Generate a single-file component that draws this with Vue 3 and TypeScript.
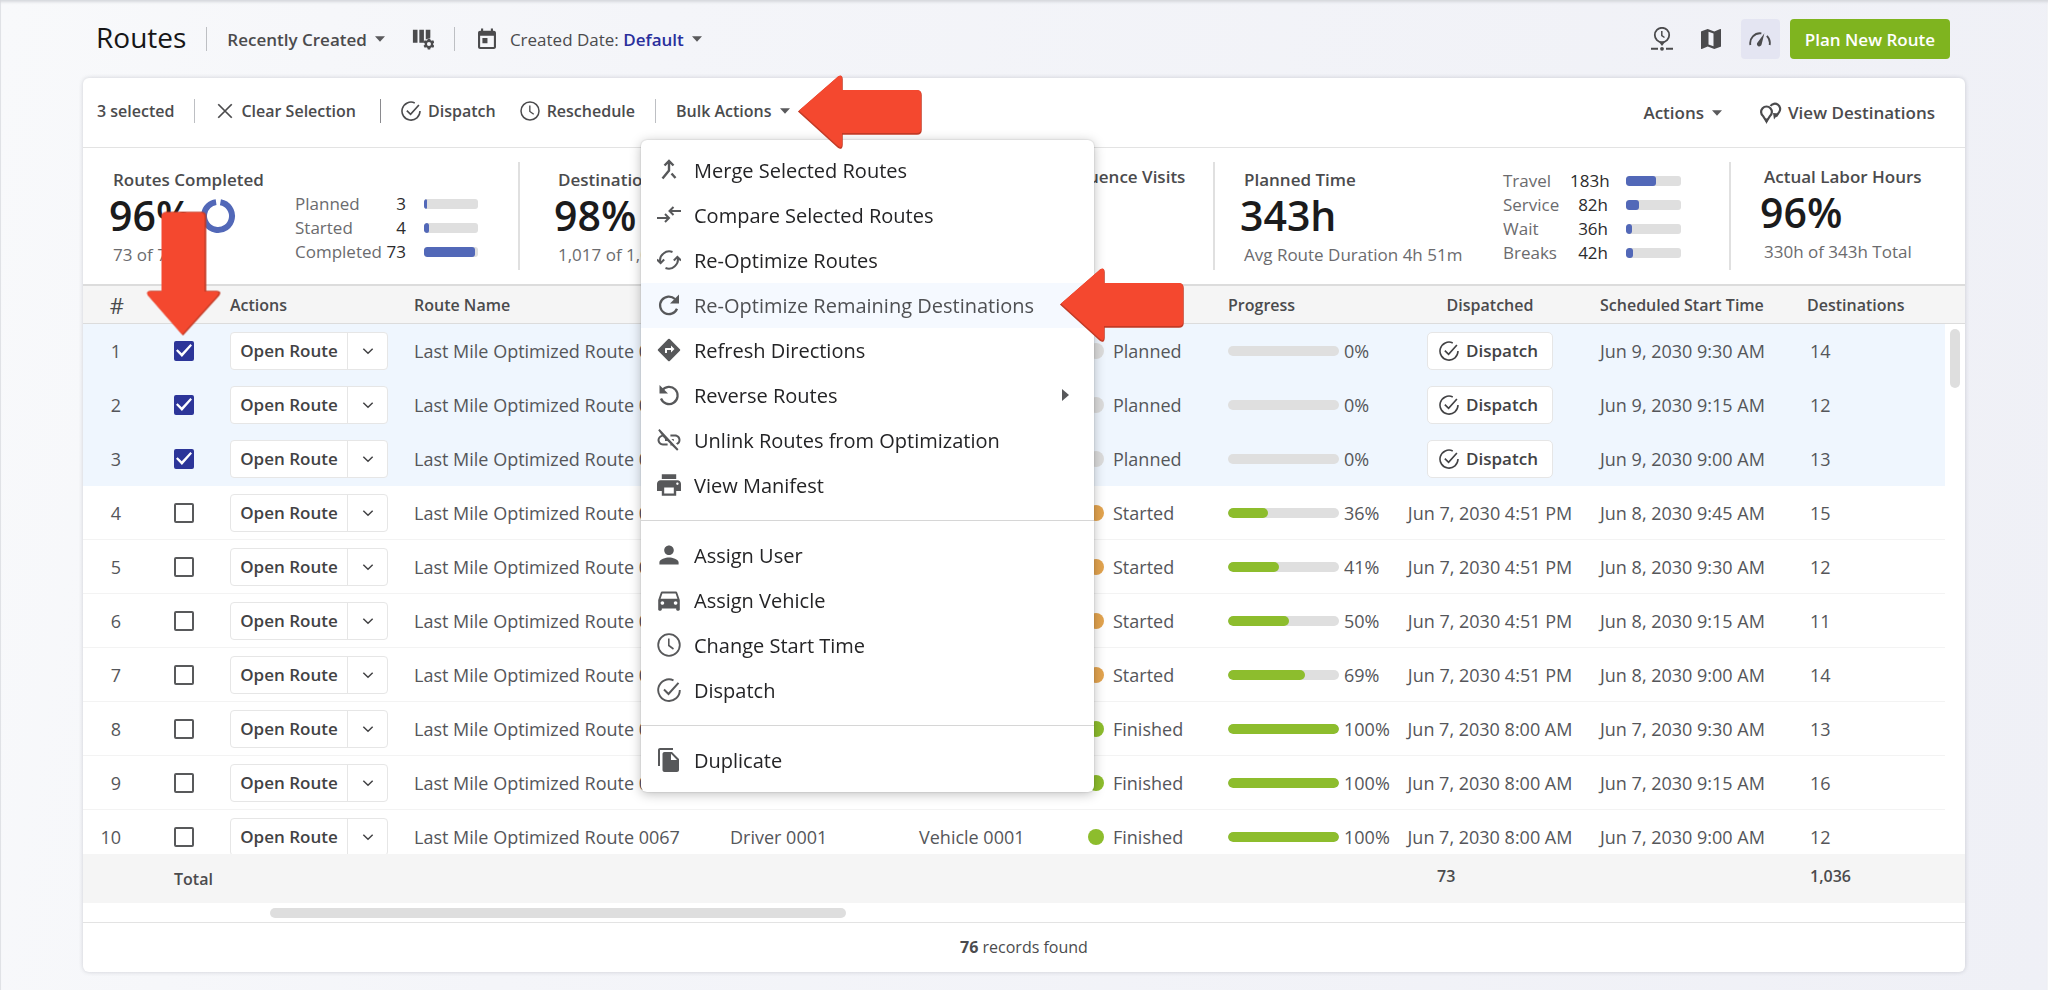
<script setup lang="ts">
import { h, ref } from 'vue'

const s = (d: string, w = 2) => `<path d="${d}" fill="none" stroke="currentColor" stroke-width="${w}"/>`
const f = (d: string) => `<path d="${d}" fill="currentColor" fill-rule="evenodd"/>`
const grow = (inner: string, k: number) => `<g transform="translate(12 12) scale(${k}) translate(-12 -12)">${inner}</g>`

const icons: Record<string, string> = {
  merge: s('M12 3.5V12.5L5.5 20.5M7.5 7.5L12 3L16.5 7.5', 2.4) + s('M14.5 15.5L18.5 20', 2.4),
  compare: s('M0 15H11M8 11L12 15L8 19M24 8H13M16.5 4L12.5 8L16.5 12'),
  cached: s('M6.5 5.5A8.7 8.7 0 0 1 15.5 4M3.3 14.5A8.8 8.8 0 0 1 6.5 5.5M0 11.5L3.6 15L7.2 11.5') +
    s('M8.5 20A8.7 8.7 0 0 0 17.8 18.2A8.8 8.8 0 0 0 20.7 9.5M16.8 12.5L20.4 9L24 12.5'),
  refresh: s('M20 15.8A8.8 8.8 0 1 1 18 6', 2.3) + f('M22 1.5V10.5H13Z'),
  directions: f('M22.9 11.2l-10.1-10.1a1.1 1.1 0 0 0-1.6 0L1.1 11.2a1.1 1.1 0 0 0 0 1.6l10.1 10.1c.44.44 1.15.44 1.6 0l10.1-10.1a1.1 1.1 0 0 0 0-1.6zM14 14.5V12h-4v3H8v-4c0-.55.45-1 1-1h5V7.5l3.5 3.5-3.5 3.5z'),
  replay: s('M5 7.5A8.6 8.6 0 1 1 4 15.5', 2.2) + f('M2.5 2V10.5H11Z'),
  unlink: f('M18 6.6h-4.6v1.9H18c1.9 0 3.5 1.6 3.5 3.5 0 1.6-1 2.9-2.5 3.3l1.5 1.5C22.3 16 23.5 14.2 23.5 12c0-3-2.5-5.4-5.5-5.4zM16.8 11h-2.4l2 2h.4zM1.2 2.3L4.7 6.9C2.2 7.6.5 9.6.5 12c0 3 2.5 5.4 5.5 5.4h4.6v-1.9H6c-1.9 0-3.5-1.6-3.5-3.5 0-1.8 1.4-3.3 3.2-3.5L8 11v2h2.4l3 3v1.4h1.4l5.3 5.3 1.4-1.4L2.6.9z'),
  print: grow(f('M19 8H5c-1.66 0-3 1.34-3 3v6h4v4h12v-4h4v-6c0-1.66-1.34-3-3-3zm-3 11H8v-5h8v5zm3-7c-.55 0-1-.45-1-1s.45-1 1-1 1 .45 1 1-.45 1-1 1zm-1-9H6v4h12V3z'), 1.2),
  person: grow(f('M12 12c2.21 0 4-1.79 4-4s-1.79-4-4-4-4 1.79-4 4 1.79 4 4 4zm0 2c-2.67 0-8 1.34-8 4v2h16v-2c0-2.66-5.33-4-8-4z'), 1.2),
  car: grow(f('M18.92 6.01C18.72 5.42 18.16 5 17.5 5h-11c-.66 0-1.21.42-1.42 1.01L3 12v8c0 .55.45 1 1 1h1c.55 0 1-.45 1-1v-1h12v1c0 .55.45 1 1 1h1c.55 0 1-.45 1-1v-8l-2.08-5.99zM6.5 16c-.83 0-1.5-.67-1.5-1.5S5.67 13 6.5 13s1.5.67 1.5 1.5S7.33 16 6.5 16zm11 0c-.83 0-1.5-.67-1.5-1.5s.67-1.5 1.5-1.5 1.5.67 1.5 1.5-.67 1.5-1.5 1.5zM5 11l1.5-4.5h11L19 11H5z'), 1.2),
  clock: '<circle cx="12" cy="12" r="10.8" fill="none" stroke="currentColor" stroke-width="1.8"/>' + s('M11.8 5.5V12.5L16.5 16', 1.6),
  check: s('M16.5 2.3A10.8 10.8 0 1 0 22.8 12', 1.9) + s('M7 11.5L11.5 16L21.5 4.8', 2),
  copy: f('M16 0H3C1.9 0 1 .9 1 2v16h2V2h13zM15 4l7 7v11c0 1.1-.9 2-2 2H7.5c-1.1 0-2-.9-2-2V6c0-1.1.9-2 2-2zm-1 8h6L14 5.7z'),
  close: s('M3 3L21 21M21 3L3 21', 2.3),
  columns: f('M1 2h5v14H1zM8 2h5v14H8zM15 2h5v8.5l-5 2z') +
    f('M17.2 11.5h2.6l.4 1.7 1.2.7 1.7-.5 1.3 2.2-1.3 1.2v1.4l1.3 1.2-1.3 2.2-1.7-.5-1.2.7-.4 1.7h-2.6l-.4-1.7-1.2-.7-1.7.5-1.3-2.2 1.3-1.2v-1.4l-1.3-1.2 1.3-2.2 1.7.5 1.2-.7zM18.5 15.3a2.2 2.2 0 1 0 0 4.4 2.2 2.2 0 0 0 0-4.4z'),
  calendar: f('M19.5 3H18.5V.5h-2.3V3H7.8V.5H5.5V3H4.5C3.2 3 2.2 4 2.2 5.2v15.6C2.2 22 3.2 23 4.5 23h15c1.2 0 2.3-1 2.3-2.2V5.2C21.8 4 20.7 3 19.5 3zm0 17.8h-15V8.5h15zM7 11h5.5v5.5H7z'),
  pinClock: '<circle cx="12" cy="8" r="7.2" fill="none" stroke="currentColor" stroke-width="1.8"/>' +
    s('M11.8 4V8.5L14.5 10.5', 1.5) + f('M9 15h6L12 19zM1 20.8h7v2H1zM16 20.8h7v2H16z') + '<circle cx="12" cy="21.8" r="1.9" fill="currentColor"/>',
  map: f('M21.5 2L21.2 2.1 15.3 4.4 8.7 2.1 2.4 4.2C2.2 4.3 2 4.5 2 4.8v16.6c0 .3.3.6.6.6l.2-.1 5.9-2.3 6.6 2.3 6.3-2.1c.2-.1.4-.3.4-.6V2.6c0-.3-.2-.6-.5-.6zM9.5 4.8l5 1.7v12.8l-5-1.7z'),
  gauge: s('M1.5 18.5A10.8 10.8 0 0 1 13.5 5.8M19.5 8.5A11 11 0 0 1 22.5 18.5', 2) + f('M16.8 5.8L13.8 17.8A2.6 2.6 0 1 1 9.3 15.7z'),
  pins: s('M7.5 20.5L4 15A5.4 5.4 0 1 1 11 15Z', 2.2) + s('M11.5 5A5.2 5.2 0 1 1 20.2 11L17 15.5', 2.2) +
    f('M5.5 17.5h4L7.5 23zM14 12l5.5 .5L15 18.5z'),
  chevron: s('M5 8.5L12 15.5L19 8.5', 2.2),
}

const Icon = (p: { name: string }) =>
  h('svg', { viewBox: '0 0 24 24', 'aria-hidden': 'true', innerHTML: icons[p.name] })
Icon.props = ['name']

const Caret = () =>
  h('svg', { viewBox: '0 0 10 6', 'aria-hidden': 'true', width: 10, height: 6, innerHTML: '<path d="M0 .3H10L5 5.7Z" fill="currentColor"/>' })

const arrowPath = 'M2 36.5L41 2.5Q45 0 45 4V16H120Q124 16 124 20V55Q124 59 120 59H45V70Q45 75 41 72Z'
const Arrow = () =>
  h('svg', {
    viewBox: '0 0 126 75', width: 126, height: 75, 'aria-hidden': 'true',
    innerHTML: `<path d="${arrowPath}" fill="#c23a25" stroke="#c23a25" stroke-width="1.5"/><path d="${arrowPath}" transform="translate(0 -1)" fill="#f4482f"/>`,
  })

type Bar = { label: string; value: string; pct: number }
type Stat = { title: string; value: string; sub: string; ring?: number; raised?: boolean; bars?: Bar[]; arrow?: boolean }
const stats: Stat[] = [
  { title: 'Routes Completed', value: '96%', sub: '73 of 76', ring: 96, arrow: true, bars: [
    { label: 'Planned', value: '3', pct: 6 }, { label: 'Started', value: '4', pct: 9 }, { label: 'Completed', value: '73', pct: 94 }] },
  { title: 'Destinations Completed', value: '98%', sub: '1,017 of 1,036' },
  { title: 'Out of Sequence Visits', value: '0%', sub: '0 of 73', ring: 0, raised: true },
  { title: 'Planned Time', value: '343h', sub: 'Avg Route Duration 4h 51m', bars: [
    { label: 'Travel', value: '183h', pct: 54 }, { label: 'Service', value: '82h', pct: 24 },
    { label: 'Wait', value: '36h', pct: 10 }, { label: 'Breaks', value: '42h', pct: 13 }] },
  { title: 'Actual Labor Hours', value: '96%', sub: '330h of 343h Total', raised: true },
]

type MenuItem = { icon: string; label: string; active?: boolean; sub?: boolean }
const menu: MenuItem[][] = [
  [
    { icon: 'merge', label: 'Merge Selected Routes' },
    { icon: 'compare', label: 'Compare Selected Routes' },
    { icon: 'cached', label: 'Re-Optimize Routes' },
    { icon: 'refresh', label: 'Re-Optimize Remaining Destinations', active: true },
    { icon: 'directions', label: 'Refresh Directions' },
    { icon: 'replay', label: 'Reverse Routes', sub: true },
    { icon: 'unlink', label: 'Unlink Routes from Optimization' },
    { icon: 'print', label: 'View Manifest' },
  ],
  [
    { icon: 'person', label: 'Assign User' },
    { icon: 'car', label: 'Assign Vehicle' },
    { icon: 'clock', label: 'Change Start Time' },
    { icon: 'check', label: 'Dispatch' },
  ],
  [{ icon: 'copy', label: 'Duplicate' }],
]

type Status = 'Planned' | 'Started' | 'Finished'
type Row = { status: Status; progress: number; fill: number; dispatched: string; start: string; dest: number }
const row = (status: Status, progress: number, dispatched: string, start: string, dest: number, fill = progress): Row =>
  ({ status, progress, fill, dispatched, start, dest })
const rows: Row[] = [
  row('Planned', 0, '', 'Jun 9, 2030 9:30 AM', 14),
  row('Planned', 0, '', 'Jun 9, 2030 9:15 AM', 12),
  row('Planned', 0, '', 'Jun 9, 2030 9:00 AM', 13),
  row('Started', 36, 'Jun 7, 2030 4:51 PM', 'Jun 8, 2030 9:45 AM', 15),
  row('Started', 41, 'Jun 7, 2030 4:51 PM', 'Jun 8, 2030 9:30 AM', 12, 46),
  row('Started', 50, 'Jun 7, 2030 4:51 PM', 'Jun 8, 2030 9:15 AM', 11, 55),
  row('Started', 69, 'Jun 7, 2030 4:51 PM', 'Jun 8, 2030 9:00 AM', 14),
  row('Finished', 100, 'Jun 7, 2030 8:00 AM', 'Jun 7, 2030 9:30 AM', 13),
  row('Finished', 100, 'Jun 7, 2030 8:00 AM', 'Jun 7, 2030 9:15 AM', 16),
  row('Finished', 100, 'Jun 7, 2030 8:00 AM', 'Jun 7, 2030 9:00 AM', 12),
]
const selected = ref<boolean[]>(rows.map((_, i) => i < 3))
const routeName = (i: number) => `Last Mile Optimized Route ${String(76 - i).padStart(4, '0')}`
</script>

<template>
  <div class="page">
    <header class="topbar">
      <h1>Routes</h1>
      <span class="rule"></span>
      <button class="plain view-select">Recently Created <Caret class="caret" /></button>
      <button class="plain columns-btn" aria-label="Edit columns"><Icon name="columns" class="i22" /></button>
      <span class="rule"></span>
      <button class="plain date-filter">
        <Icon name="calendar" class="i22" />
        <span>Created Date: <b>Default</b></span>
        <Caret class="caret" />
      </button>
      <div class="top-right">
        <button class="mode" aria-label="Timeline"><Icon name="pinClock" class="i24" /></button>
        <button class="mode" aria-label="Map"><Icon name="map" class="i24" /></button>
        <button class="mode on" aria-label="Dashboard"><Icon name="gauge" class="i22" /></button>
        <button class="primary">Plan New Route</button>
      </div>
    </header>

    <main class="card">
      <section class="toolbar">
        <div class="bulk">
          <span>3 selected</span>
          <span class="rule"></span>
          <button class="plain clear"><Icon name="close" class="i18" />Clear Selection</button>
          <span class="rule dark"></span>
          <button class="plain dispatch"><Icon name="check" class="i20" />Dispatch</button>
          <button class="plain"><Icon name="clock" class="i20" />Reschedule</button>
          <span class="rule"></span>
          <div class="bulk-actions">
            <button class="plain" aria-haspopup="menu" aria-expanded="true">Bulk Actions <Caret class="caret" /></button>
            <Arrow class="pointer at-button" />
            <div class="menu" role="menu">
              <div v-for="(group, g) in menu" :key="g" class="group">
                <button v-for="item in group" :key="item.label" class="item" :class="{ active: item.active }" role="menuitem">
                  <Icon :name="item.icon" class="i24" />
                  <span>{{ item.label }}</span>
                  <svg v-if="item.sub" class="more" viewBox="0 0 7 12" width="7" height="12"><path d="M0 0L7 6L0 12Z" fill="currentColor" /></svg>
                  <Arrow v-if="item.active" class="pointer at-item" />
                </button>
              </div>
            </div>
          </div>
        </div>
        <div class="tools">
          <button class="plain">Actions <Caret class="caret" /></button>
          <a href="#" class="plain"><Icon name="pins" class="i24" />View Destinations</a>
        </div>
      </section>

      <section class="stats">
        <article v-for="st in stats" :key="st.title" class="stat" :class="{ raised: st.raised }">
          <div class="figures">
            <h2>{{ st.title }}</h2>
            <div class="value">
              <strong>{{ st.value }}</strong>
              <svg v-if="st.ring !== undefined" viewBox="0 0 36 36" width="36" height="36">
                <circle v-if="st.ring" cx="18" cy="18" r="14" fill="none" stroke="#5268b8" stroke-width="6" pathLength="100" :stroke-dasharray="`${st.ring - 1} ${101 - st.ring}`" transform="rotate(-80 18 18)" />
                <circle v-else cx="18" cy="18" r="14" fill="none" stroke="#e4e4e4" stroke-width="6" />
              </svg>
            </div>
            <p>{{ st.sub }}</p>
          </div>
          <dl v-if="st.bars" class="bars" :class="{ dense: st.bars.length > 3 }">
            <div v-for="b in st.bars" :key="b.label">
              <dt>{{ b.label }}</dt>
              <dd>{{ b.value }}</dd>
              <dd class="meter"><i :style="{ width: b.pct + '%' }"></i></dd>
            </div>
          </dl>
          <Arrow v-if="st.arrow" class="pointer down" />
        </article>
      </section>

      <div class="scroller">
        <table>
          <colgroup>
            <col class="c-num" /><col class="c-check" /><col class="c-act" /><col class="c-name" /><col class="c-driver" /><col class="c-vehicle" />
            <col class="c-status" /><col class="c-progress" /><col class="c-disp" /><col class="c-start" /><col class="c-dest" /><col class="c-gutter" />
          </colgroup>
          <thead>
            <tr>
              <th class="num">#</th><th></th><th>Actions</th><th>Route Name</th><th>Driver</th><th>Vehicle</th>
              <th>Status</th><th>Progress</th><th class="mid">Dispatched</th><th>Scheduled Start Time</th><th>Destinations</th><th></th>
            </tr>
          </thead>
          <tbody>
            <tr v-for="(r, i) in rows" :key="i" :class="{ sel: selected[i] }">
              <td class="num">{{ i + 1 }}</td>
              <td><input v-model="selected[i]" type="checkbox" :aria-label="`Select route ${i + 1}`" /></td>
              <td>
                <div class="split">
                  <button>Open Route</button>
                  <button class="drop" aria-label="More actions"><Icon name="chevron" class="i16" /></button>
                </div>
              </td>
              <td>{{ routeName(i) }}</td>
              <td>Driver 0001</td>
              <td>Vehicle 0001</td>
              <td><div class="status"><i :class="r.status.toLowerCase()"></i>{{ r.status }}</div></td>
              <td><div class="progress"><span><i :style="{ width: r.fill + '%' }"></i></span>{{ r.progress }}%</div></td>
              <td class="mid">
                <template v-if="r.dispatched">{{ r.dispatched }}</template>
                <button v-else class="send"><Icon name="check" class="i20" />Dispatch</button>
              </td>
              <td>{{ r.start }}</td>
              <td class="dest">{{ r.dest }}</td>
              <td class="gutter"></td>
            </tr>
          </tbody>
          <tfoot>
            <tr>
              <td></td><td colspan="2">Total</td><td colspan="5"></td>
              <td class="sum first">73</td><td></td><td class="sum dest">1,036</td><td></td>
            </tr>
          </tfoot>
        </table>
        <span class="thumb-y"></span>
      </div>
      <div class="track"><span></span></div>
      <footer><b>76</b> records found</footer>
    </main>
  </div>
</template>

<style>
body {
  margin: 0;
}
</style>

<style scoped>
* {
  box-sizing: border-box;
}
.page {
  height: 100vh;
  min-height: 640px;
  display: flex;
  flex-direction: column;
  padding: 0 83px 18px;
  font-family: 'Open Sans', 'Noto Sans', sans-serif;
  font-size: 18px;
  color: #4b4b4d;
  background: linear-gradient(100deg, #f8f9fb 0%, #f4f5f9 30%, #eff0f6 100%);
  box-shadow: inset 0 3px 3px -1px #d5d7dc, inset 1px 0 0 #e3e4e8, inset -1px 0 0 #f8f8fb;
  overflow: hidden;
}
button,
a {
  font: inherit;
  color: inherit;
  text-decoration: none;
  cursor: pointer;
}
.plain {
  display: flex;
  align-items: center;
  border: 0;
  padding: 0;
  background: none;
  white-space: nowrap;
}
.caret {
  margin-left: 8px;
  color: #5a5a5c;
}
.rule {
  width: 1px;
  height: 24px;
  background: #bdbfc3;
}
.rule.dark {
  background: #8a8a8e;
}
.i16 { width: 16px; height: 16px; }
.i18 { width: 18px; height: 18px; }
.i20 { width: 20px; height: 20px; }
.i22 { width: 22px; height: 22px; }
.i24 { width: 24px; height: 24px; }
svg {
  display: block;
  flex: none;
}

.topbar {
  height: 78px;
  flex: none;
  display: flex;
  align-items: center;
  padding: 0 15px 0 13px;
  font-size: 17px;
}
h1 {
  margin: 0 20px 5px 0;
  font-size: 28px;
  line-height: 40px;
  font-weight: 400;
  color: #161617;
}
.view-select {
  margin: 0 27px 0 20px;
  font-weight: 600;
}
.columns-btn {
  margin-right: 20px;
}
.date-filter {
  margin-left: 21px;
}
.date-filter span {
  margin-left: 12px;
}
.date-filter b {
  font-weight: 600;
  color: #2a2f9c;
}
.top-right {
  margin-left: auto;
  display: flex;
  align-items: center;
  gap: 10px;
}
.mode {
  width: 39px;
  height: 40px;
  display: grid;
  place-items: center;
  border: 0;
  border-radius: 4px;
  padding: 0;
  background: none;
}
.mode.on {
  background: #e4e5f2;
}
.primary {
  height: 40px;
  padding: 0 15px;
  border: 0;
  border-radius: 4px;
  background: #7fb41f;
  color: #fff;
  font-weight: 600;
}

.card {
  flex: 1;
  min-height: 0;
  display: flex;
  flex-direction: column;
  background: #fff;
  border-radius: 6px;
  box-shadow: 0 0 4px rgba(60, 64, 80, 0.22);
}
.toolbar {
  height: 70px;
  flex: none;
  display: flex;
  justify-content: space-between;
  padding: 0 30px 0 14px;
  border-bottom: 1px solid #e3e3e3;
  font-size: 17px;
  font-weight: 600;
}
.bulk {
  height: 65px;
  display: flex;
  align-items: center;
  gap: 20px;
  font-size: 16px;
}
.clear .i18,
.bulk .i20 {
  margin-right: 7px;
}
.clear {
  margin: 0 4px 0 1px;
}
.dispatch {
  margin-right: 4px;
}
.bulk-actions {
  position: relative;
}
.tools {
  display: flex;
  align-items: center;
  gap: 37px;
}
.tools .i24 {
  margin-right: 5px;
}

.pointer {
  position: absolute;
  z-index: 20;
}
.at-button {
  left: calc(100% + 7px);
  top: -25px;
}
.at-item {
  left: calc(100% - 35px);
  top: -15px;
}
.down {
  left: 38px;
  top: 74px;
  transform: rotate(-90deg);
}

.menu {
  position: absolute;
  z-index: 10;
  left: -35px;
  top: 40px;
  width: 453px;
  background: #fff;
  border-radius: 6px;
  box-shadow: 0 2px 12px rgba(0, 0, 0, 0.26), 0 0 2px rgba(0, 0, 0, 0.2);
  font-size: 20px;
  font-weight: 400;
}
.group {
  padding: 12px 0;
}
.group:first-child {
  padding-top: 8px;
}
.group:last-child {
  padding-bottom: 9px;
}
.group + .group {
  border-top: 1px solid #d6d6d6;
}
.item {
  position: relative;
  width: 100%;
  height: 45px;
  display: flex;
  align-items: center;
  gap: 13px;
  padding: 0 25px 0 16px;
  border: 0;
  background: none;
  color: #242426;
  white-space: nowrap;
}
.item svg {
  color: #57585a;
}
.item.active {
  background: #f5f9ff;
  color: #4f5053;
}
.more {
  margin-left: auto;
}

.stats {
  flex: none;
  display: grid;
  grid-template-columns: 435fr 458fr 237fr 516fr 236fr;
  padding: 14px 0;
  border-bottom: 2px solid #dcdcdc;
}
.stat {
  position: relative;
  min-width: 0;
  height: 108px;
  display: flex;
  justify-content: space-between;
  padding: 6px 40px 0 30px;
  white-space: nowrap;
}
.stat + .stat {
  border-left: 2px solid #e0e0e0;
  padding-left: 38px;
}
.stat.raised {
  padding-top: 3px;
  padding-right: 0;
}
.stat:nth-child(3) {
  padding-left: 24px;
}
.stat:nth-child(4) {
  padding-left: 29px;
  padding-right: 48px;
}
.stat:last-child {
  padding-left: 33px;
}
h2 {
  margin: 0;
  font-size: 17px;
  line-height: 24px;
  font-weight: 600;
}
.value {
  display: flex;
  align-items: center;
  gap: 9px;
  margin: 1px 0 5px -4px;
  line-height: 45px;
}
.raised .value {
  gap: 0;
}
.value strong {
  font-size: 41px;
  font-weight: 600;
  color: #1b1b1c;
}
.figures p {
  margin: 0;
  font-size: 17px;
  line-height: 24px;
  color: #6b6b6e;
}
.bars {
  margin: 24px 0 0;
  font-size: 17px;
  line-height: 24px;
}
.bars.dense {
  margin-top: 1px;
}
.bars div {
  display: grid;
  grid-template-columns: 88px 23px 72px;
  align-items: center;
}
.bars.dense div {
  grid-template-columns: 67px 38px 73px;
}
.bars dt {
  color: #6b6b6e;
}
.bars dd {
  margin: 0;
  text-align: right;
  color: #2b2b2d;
}
.bars .meter {
  height: 10px;
  margin-left: 18px;
  border-radius: 3px;
  background: #dfdfdf;
  overflow: hidden;
}
.meter i {
  display: block;
  height: 100%;
  border-radius: 3px;
  background: #5268b8;
}

.scroller {
  position: relative;
  flex: 1;
  min-height: 0;
  overflow: hidden;
}
table {
  width: 100%;
  table-layout: fixed;
  border-collapse: separate;
  border-spacing: 0;
}
.c-num { width: 77px; }
.c-check { width: 56px; }
.c-act { width: 184px; }
.c-name { width: 316px; }
.c-driver { width: 189px; }
.c-vehicle { width: 169px; }
.c-status { width: 140px; }
.c-progress { width: 180px; }
.c-disp { width: 192px; }
.c-start { width: 207px; }
.c-dest { width: 152px; }
.c-gutter { width: 20px; }
th,
td {
  padding: 0 0 0 14px;
  text-align: left;
  white-space: nowrap;
}
th {
  height: 38px;
  background: #f5f5f5;
  border-bottom: 1px solid #dcdcdc;
  font-size: 16px;
  font-weight: 600;
}
tbody td {
  height: 54px;
  border-bottom: 1px solid #f3f3f3;
  color: #55565a;
}
.sel td {
  background: #eff6fe;
  border-color: #eff6fe;
}
tbody .gutter {
  background: #fff;
  border-color: #fff;
}
.num {
  padding: 0 39px 0 0;
  text-align: right;
}
th.num {
  padding-right: 36px;
  font-size: 22px;
  font-weight: 400;
}
.mid {
  padding: 0;
  text-align: center;
}
.dest {
  padding-left: 17px;
}
tfoot td {
  position: sticky;
  bottom: 0;
  height: 49px;
  background: #f5f5f5;
  font-size: 16px;
  font-weight: 600;
}
tfoot .sum {
  padding-bottom: 5px;
}
.first {
  padding-left: 43px;
}
input[type='checkbox'] {
  appearance: none;
  display: grid;
  place-items: center;
  width: 20px;
  height: 20px;
  margin: 0;
  border: 2px solid #58595b;
  border-radius: 2px;
  background: #fff;
}
input[type='checkbox']:checked {
  border-color: #2c3599;
  background: #2c3599;
}
input[type='checkbox']:checked::before {
  content: '';
  width: 16px;
  height: 13px;
  background: #fff;
  clip-path: polygon(0 52%, 10% 40%, 36% 72%, 90% 0, 100% 12%, 37% 100%);
}
.split {
  display: flex;
  width: 158px;
  height: 38px;
  border: 1px solid #e6e6e6;
  border-radius: 4px;
  background: #fff;
}
.split button {
  flex: 1;
  border: 0;
  padding: 0;
  background: none;
  color: #424244;
  font-size: 17px;
  font-weight: 600;
}
.split .drop {
  flex: none;
  width: 40px;
  display: grid;
  place-items: center;
  border-left: 1px solid #e6e6e6;
}
.status {
  display: flex;
  align-items: center;
  gap: 9px;
}
.status i {
  width: 16px;
  height: 16px;
  border-radius: 50%;
}
.planned { background: #dcdcdc; }
.started { background: #e3a44f; }
.finished { background: #8dbd2d; }
.progress {
  display: flex;
  align-items: center;
  gap: 5px;
}
.progress span {
  width: 111px;
  height: 10px;
  border-radius: 5px;
  background: #dfdfdf;
  overflow: hidden;
}
.progress i {
  display: block;
  height: 100%;
  border-radius: 5px;
  background: #8dbd2d;
}
.send {
  display: inline-flex;
  align-items: center;
  gap: 7px;
  height: 38px;
  padding: 0 14px 0 11px;
  vertical-align: middle;
  border: 1px solid #e6e6e6;
  border-radius: 5px;
  background: #fff;
  color: #424244;
  font-size: 17px;
  font-weight: 600;
}
.thumb-y {
  position: absolute;
  right: 5px;
  top: 43px;
  width: 10px;
  height: 59px;
  border-radius: 5px;
  background: #dedede;
}
.track {
  flex: none;
  height: 20px;
  padding: 5px 0 0 187px;
  border-bottom: 1px solid #e3e3e3;
}
.track span {
  display: block;
  width: 34%;
  max-width: 583px;
  height: 10px;
  border-radius: 5px;
  background: #dedede;
}
footer {
  flex: none;
  height: 49px;
  line-height: 49px;
  text-align: center;
  font-size: 16px;
}
</style>
